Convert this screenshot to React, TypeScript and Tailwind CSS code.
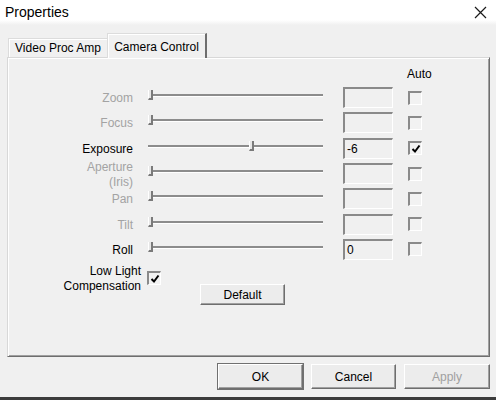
import React from 'react';

type Control = {
  label: string[];
  enabled: boolean;
  thumb: string; // left offset class for the slider thumb
  value: string;
  auto: boolean;
};

const CONTROLS: Control[] = [
  { label: ['Zoom'], enabled: false, thumb: 'left-[2px]', value: '', auto: false },
  { label: ['Focus'], enabled: false, thumb: 'left-[2px]', value: '', auto: false },
  { label: ['Exposure'], enabled: true, thumb: 'left-[103px]', value: '-6', auto: true },
  { label: ['Aperture', '(Iris)'], enabled: false, thumb: 'left-[2px]', value: '', auto: false },
  { label: ['Pan'], enabled: false, thumb: 'left-[2px]', value: '', auto: false },
  { label: ['Tilt'], enabled: false, thumb: 'left-[2px]', value: '', auto: false },
  { label: ['Roll'], enabled: true, thumb: 'left-[2px]', value: '0', auto: false },
];

const Check = () => (
  <svg width="10" height="10" viewBox="0 0 10 10" className="block">
    <path d="M1.5 5 L4 7.5 L8.5 1.5" fill="none" stroke="#000" strokeWidth="2" />
  </svg>
);

const CheckBox = ({ checked }: { checked: boolean }) => (
  <div className="w-[14px] h-[14px] border-t-2 border-l-2 border-t-[#8a8a8a] border-l-[#8a8a8a] border-r border-b border-r-white border-b-white bg-[#f2f2f2] flex items-center justify-center">
    {checked && <Check />}
  </div>
);

const Slider = ({ thumb }: { thumb: string }) => (
  <div className="relative w-[179px] h-[21px]">
    <div className="absolute left-[2px] right-[2px] top-[7px] h-[3px] border-t-2 border-[#8c8c8c] border-b border-b-white" />
    <div className={`absolute ${thumb} top-[3px] w-[5px] h-[10px] border-r-2 border-b-2 border-r-[#7a7a7a] border-b-[#7a7a7a] border-l border-l-white bg-[#e6e6e6]`} />
  </div>
);

const ValueBox = ({ value }: { value: string }) => (
  <div className="w-[50px] h-[21px] border-t-2 border-l-2 border-t-[#8a8a8a] border-l-[#8a8a8a] border-r border-b border-r-white border-b-white bg-[#f0f0f0] px-[2px] flex items-center text-black leading-none">
    {value}
  </div>
);

const RaisedButton = ({
  children,
  isDefault = false,
  disabled = false,
  className = '',
}: {
  children: React.ReactNode;
  isDefault?: boolean;
  disabled?: boolean;
  className?: string;
}) => (
  <div
    className={`${className} flex items-center justify-center bg-[#ececec] border border-t-white border-l-white border-r-[#6e6e6e] border-b-[#6e6e6e] shadow-[inset_-1px_-1px_0_#a0a0a0] ${
      isDefault ? 'outline outline-1 outline-[#707070]' : ''
    } ${disabled ? 'text-[#a0a0a0]' : 'text-black'}`}
  >
    {children}
  </div>
);

export default function App() {
  return (
    <div className="w-[496px] h-[400px] bg-[#f0f0f0] flex flex-col text-[12px] font-['Liberation_Sans',Arial,sans-serif] text-black select-none">
      {/* Title bar */}
      <div className="h-[25px] bg-[linear-gradient(to_bottom,#ffffff_80%,#f0f0f0)] flex items-center justify-between pl-[5px] pr-[9px]">
        <span className="text-[14px]">Properties</span>
        <svg width="13" height="13" viewBox="0 0 13 13">
          <path d="M1 1 L12 12 M12 1 L1 12" stroke="#1a1a1a" strokeWidth="1.2" />
        </svg>
      </div>

      {/* Tabs */}
      <div className="mt-[8px] h-[24px] pl-[8px] flex items-end relative z-10">
        <div className="w-[99px] h-[19px] border-t border-l border-[#dcdcdc] shadow-[inset_1px_1px_0_#fff] flex items-center justify-center">
          Video Proc Amp
        </div>
        <div className="w-[100px] h-[25px] -mb-px bg-[#f0f0f0] border-t border-l border-[#dcdcdc] border-r-2 border-r-[#6e6e6e] shadow-[inset_1px_1px_0_#fff] flex items-start justify-center pt-[4px]">
          Camera Control
        </div>
      </div>

      {/* Panel */}
      <div className="ml-[7px] w-[483px] h-[300px] border border-t-[#d8d8d8] border-l-[#d8d8d8] border-r-[#6e6e6e] border-b-[#6e6e6e] shadow-[inset_1px_1px_0_#fff,inset_-1px_-1px_0_#a0a0a0] flex flex-col">
        <div className="h-[27px] flex items-end pb-[4px] pl-[399px] leading-[14px]">Auto</div>

        {CONTROLS.map((c) => (
          <div key={c.label[0]} className="h-[25.3px] flex items-center">
            <div
              className={`w-[125px] text-right leading-[15px] ${c.label.length > 1 ? 'pt-[3px]' : 'pt-[2px]'} ${
                c.enabled ? 'text-black' : 'text-[#a3a3a3]'
              }`}
            >
              {c.label.map((l) => (
                <div key={l}>{l}</div>
              ))}
            </div>
            <div className="ml-[13px]">
              <Slider thumb={c.thumb} />
            </div>
            <div className="ml-[18px]">
              <ValueBox value={c.value} />
            </div>
            <div className="ml-[15px]">
              <CheckBox checked={c.auto} />
            </div>
          </div>
        ))}

        <div className="mt-[2px] flex items-start">
          <div className="w-[133px] text-right leading-[15px]">
            <div>Low Light</div>
            <div>Compensation</div>
          </div>
          <div className="ml-[6px] mt-[7px]">
            <CheckBox checked />
          </div>
          <RaisedButton className="ml-[39px] mt-[20px] w-[85px] h-[21px]">Default</RaisedButton>
        </div>
      </div>

      {/* Dialog buttons */}
      <div className="mt-[7px] flex justify-end gap-[8px] pr-[6px]">
        <RaisedButton isDefault className="w-[85px] h-[25px]">
          OK
        </RaisedButton>
        <RaisedButton className="w-[85px] h-[25px]">Cancel</RaisedButton>
        <RaisedButton disabled className="w-[86px] h-[25px]">
          Apply
        </RaisedButton>
      </div>

      <div className="flex-1" />
      <div className="h-[3px] bg-[#3c3c3c]" />
    </div>
  );
}
